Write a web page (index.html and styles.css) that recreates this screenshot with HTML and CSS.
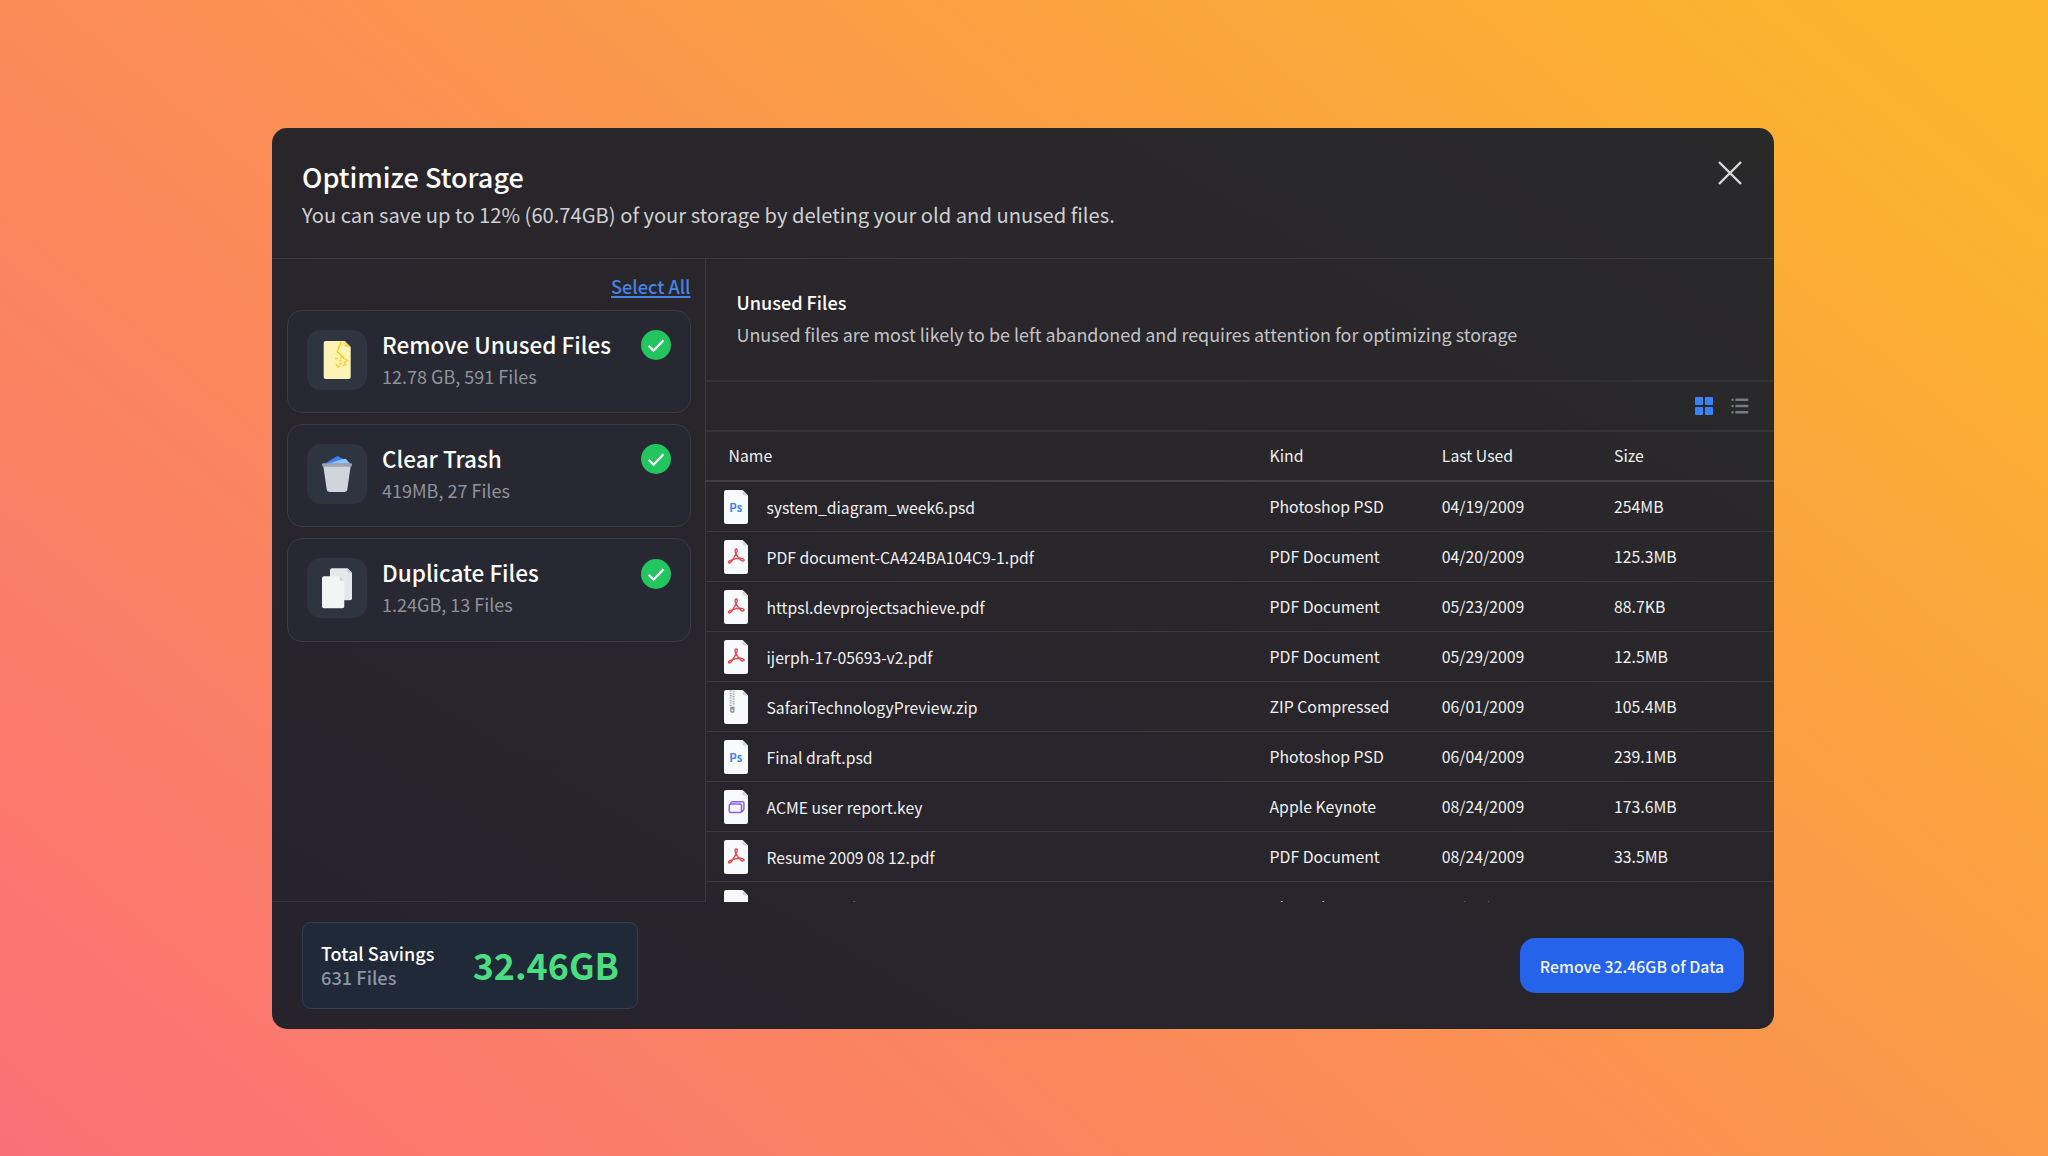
FILE: index.html
```html
<!DOCTYPE html>
<html lang="en">
<head>
<meta charset="utf-8">
<title>Optimize Storage</title>
<link rel="stylesheet" href="styles.css">
</head>
<body>
<svg class="sprites" width="0" height="0" aria-hidden="true">
  <symbol id="page" viewBox="0 0 24 34">
    <path d="M2.2 0H18.6L24 5.4V31.8a2.2 2.2 0 0 1-2.2 2.2H2.2A2.2 2.2 0 0 1 0 31.8V2.2A2.2 2.2 0 0 1 2.2 0Z" fill="#f9fafb"/>
    <path d="M18.6 0 24 5.4H20a1.4 1.4 0 0 1-1.4-1.4Z" fill="#d1d5db"/>
  </symbol>
  <symbol id="file-psd" viewBox="0 0 24 34">
    <use href="#page"/>
    <text x="5.3" y="21.7" class="ps-mark">Ps</text>
  </symbol>
  <symbol id="file-pdf" viewBox="0 0 24 34">
    <use href="#page"/>
    <path d="M12.200 9c-1.500 0-1.500 2.400-.1 5C13.300 16.200 15 18.400 17 20.200c1.500 1.500 3.600.5 2.900-.7C19 18 14 18 8.500 19.600 5.500 20.500 4 21.800 4.600 22.600c.8 1 2.600-.5 4-2.800C10.200 17.200 12 14.200 13 11.500c.5-1.500.1-2.500-.8-2.500Z" fill="none" stroke="#e5484d" stroke-width="1.400" stroke-linejoin="round"/>
  </symbol>
  <symbol id="file-zip" viewBox="0 0 24 34">
    <use href="#page"/>
    <path d="M6.600 .3v16M9.600 1.300v15" stroke="#9ca3af" stroke-width="1.900" stroke-dasharray="1.300 1.100" fill="none"/>
    <path d="M6.100 16.800h4.400v4.400a1.600 1.600 0 0 1-1.600 1.600H7.700a1.600 1.600 0 0 1-1.600-1.600Z" fill="#8b92a0"/>
    <path d="M7.500 19.500h1.700v1.700H7.500Z" fill="#f9fafb"/>
  </symbol>
  <symbol id="file-key" viewBox="0 0 24 34">
    <use href="#page"/>
    <g fill="none" stroke="#8b5cf6" stroke-width="1.500" stroke-linejoin="round">
      <rect x="5.300" y="14" width="12.200" height="8.400" rx="1.500"/>
      <path d="M6.200 14 7.300 12.400a1.200 1.200 0 0 1 1-.6H18.600a1.300 1.300 0 0 1 1.300 1.300V18.700a2 2 0 0 1-.6 1.400L17.700 21.600"/>
    </g>
  </symbol>
  <symbol id="check" viewBox="0 0 30 30">
    <circle cx="15" cy="15" r="15" fill="#22c55e"/>
    <path d="M7.600 15.800 12.500 20.700 22.400 10.400" fill="none" stroke="#fff" stroke-width="2.300"/>
  </symbol>
</svg>

<main class="modal">
  <header class="modal-head">
    <div>
      <h1 class="title">Optimize Storage</h1>
      <p class="subtitle">You can save up to 12% (60.74GB) of your storage by deleting your old and unused files.</p>
    </div>
    <svg class="close" viewBox="0 0 24 24"><path d="M1 1 23 23M23 1 1 23" fill="none" stroke="#d9d9da" stroke-width="2.400"/></svg>
  </header>

  <div class="modal-body">
    <aside class="side">
      <a class="select-all">Select All</a>
      <div class="card">
        <svg class="tile" viewBox="0 0 60 60">
          <path d="M18.700 11H37.700L43.700 17V47a2 2 0 0 1-2 2H18.700a2 2 0 0 1-2-2V13a2 2 0 0 1 2-2Z" fill="#fef3b4"/>
          <path d="M37.700 11 43.700 17H39a1.300 1.300 0 0 1-1.300-1.300Z" fill="#fcd34d"/>
          <path d="M34.200 11.500 30.300 21.500 37.300 28.500" fill="none" stroke="#facc15" stroke-width="1.500"/>
          <path d="M37.300 28.500 40.500 30.500 37.500 32.500 38.500 34.500 35.500 36M33.500 26.500 34.500 28.500M28 28.500H31M32.500 30 34.500 31.500M29 34 31 37 33 35.500M32 33.500 35 34" fill="none" stroke="#fbd34b" stroke-width="1.700"/>
        </svg>
        <div class="card-text"><h2 class="card-title">Remove Unused Files</h2><p class="card-sub">12.78 GB, 591 Files</p></div>
        <svg class="check"><use href="#check"/></svg>
      </div>
      <div class="card">
        <svg class="tile" viewBox="0 0 60 60">
          <path d="M17.500 19.800 30.500 12 37 15.500V20Z" fill="#3b82f6"/>
          <path d="M21 20 34 15.500 38.500 14.800 43.500 19.800Z" fill="#93c5fd"/>
          <path d="M16.300 22H43.700L40.300 45.600a2.800 2.800 0 0 1-2.800 2.400H22.500a2.800 2.800 0 0 1-2.800-2.400Z" fill="#d1d5db"/>
          <path d="M16 19.300H44a1 1 0 0 1 1 1L44.400 22.700H15.600L15 20.300a1 1 0 0 1 1-1Z" fill="#9ca3af"/>
        </svg>
        <div class="card-text"><h2 class="card-title">Clear Trash</h2><p class="card-sub">419MB, 27 Files</p></div>
        <svg class="check"><use href="#check"/></svg>
      </div>
      <div class="card">
        <svg class="tile" viewBox="0 0 60 60">
          <path d="M25 10.300H40.500L45 14.800V40.300a2 2 0 0 1-2 2H25a2 2 0 0 1-2-2V12.300a2 2 0 0 1 2-2Z" fill="#e5e7eb"/>
          <path d="M40.500 10.300 45 14.800H41.500a1 1 0 0 1-1-1Z" fill="#c9cdd4"/>
          <path d="M17 18.200H32.700L37.300 22.800V48.200a2 2 0 0 1-2 2H17a2 2 0 0 1-2-2V20.200a2 2 0 0 1 2-2Z" fill="#f3f4f6"/>
          <path d="M32.700 18.200 37.300 22.800H33.700a1 1 0 0 1-1-1Z" fill="#d1d5db"/>
        </svg>
        <div class="card-text"><h2 class="card-title">Duplicate Files</h2><p class="card-sub">1.24GB, 13 Files</p></div>
        <svg class="check"><use href="#check"/></svg>
      </div>
    </aside>

    <section class="detail">
      <div class="intro">
        <h3 class="intro-title">Unused Files</h3>
        <p class="intro-text">Unused files are most likely to be left abandoned and requires attention for optimizing storage</p>
      </div>
      <div class="toolbar">
        <svg class="tool" viewBox="0 0 18 18" fill="#3b82f6"><rect width="8.100" height="8.100" rx="1"/><rect x="9.900" width="8.100" height="8.100" rx="1"/><rect y="9.900" width="8.100" height="8.100" rx="1"/><rect x="9.900" y="9.900" width="8.100" height="8.100" rx="1"/></svg>
        <svg class="tool" viewBox="0 0 18 18" fill="#757a86"><circle cx="1.600" cy="2.700" r="1.200"/><circle cx="1.600" cy="9" r="1.200"/><circle cx="1.600" cy="15.300" r="1.200"/><rect x="4.300" y="1.500" width="13" height="2.400" rx=".5"/><rect x="4.300" y="7.800" width="13" height="2.400" rx=".5"/><rect x="4.300" y="14.100" width="13" height="2.400" rx=".5"/></svg>
      </div>
      <div class="row row-head"><span class="head-name">Name</span><span>Kind</span><span>Last Used</span><span>Size</span></div>
      <div class="rows">
        <div class="row"><div class="name"><svg class="file"><use href="#file-psd"/></svg>system_diagram_week6.psd</div><span>Photoshop PSD</span><span>04/19/2009</span><span>254MB</span></div>
        <div class="row"><div class="name"><svg class="file"><use href="#file-pdf"/></svg>PDF document-CA424BA104C9-1.pdf</div><span>PDF Document</span><span>04/20/2009</span><span>125.3MB</span></div>
        <div class="row"><div class="name"><svg class="file"><use href="#file-pdf"/></svg>httpsl.devprojectsachieve.pdf</div><span>PDF Document</span><span>05/23/2009</span><span>88.7KB</span></div>
        <div class="row"><div class="name"><svg class="file"><use href="#file-pdf"/></svg>ijerph-17-05693-v2.pdf</div><span>PDF Document</span><span>05/29/2009</span><span>12.5MB</span></div>
        <div class="row"><div class="name"><svg class="file"><use href="#file-zip"/></svg>SafariTechnologyPreview.zip</div><span>ZIP Compressed</span><span>06/01/2009</span><span>105.4MB</span></div>
        <div class="row"><div class="name"><svg class="file"><use href="#file-psd"/></svg>Final draft.psd</div><span>Photoshop PSD</span><span>06/04/2009</span><span>239.1MB</span></div>
        <div class="row"><div class="name"><svg class="file"><use href="#file-key"/></svg>ACME user report.key</div><span>Apple Keynote</span><span>08/24/2009</span><span>173.6MB</span></div>
        <div class="row"><div class="name"><svg class="file"><use href="#file-pdf"/></svg>Resume 2009 08 12.pdf</div><span>PDF Document</span><span>08/24/2009</span><span>33.5MB</span></div>
        <div class="row row-last"><div class="name"><svg class="file"><use href="#page"/></svg>Homepage final.psd</div><span>Photoshop PSD</span><span>09/12/2009</span><span>289.1MB</span></div>
      </div>
    </section>
  </div>

  <footer class="modal-foot">
    <div class="savings">
      <div><p class="savings-title">Total Savings</p><p class="savings-sub">631 Files</p></div>
      <strong class="savings-total">32.46GB</strong>
    </div>
    <button class="remove">Remove 32.46GB of Data</button>
  </footer>
</main>
</body>
</html>
```
FILE: styles.css
```css
* { box-sizing: border-box; margin: 0; padding: 0; }

body {
  width: 2048px;
  height: 1156px;
  padding: 128px 0 0 272px;
  overflow: hidden;
  font-family: "Noto Sans CJK SC", "Noto Sans", sans-serif;
  color: #fff;
  background: linear-gradient(40deg, #fb7078 0%, #fb9053 47%, #fbb230 90%, #fcb52d 100%);
}

.sprites { position: absolute; }

.modal {
  display: flex;
  flex-direction: column;
  width: 1502px;
  height: 901px;
  border-radius: 15px;
  overflow: hidden;
  background: linear-gradient(to top right, #27232d 0%, #28262b 50%, #2a292a 100%);
}

.modal-head {
  display: flex;
  flex: none;
  justify-content: space-between;
  height: 131px;
  padding: 32px 32px 0 30px;
  border-bottom: 1px solid #3b3a40;
}
.title { font-size: 27.05px; font-weight: 500; line-height: 34px; }
.subtitle { margin-top: 6px; font-size: 20.17px; line-height: 30px; color: #cfcfd2; }
.close { width: 24px; height: 24px; margin-top: 1px; }

.modal-body { display: flex; flex: none; height: 643px; }

.side {
  display: flex;
  flex: none;
  flex-direction: column;
  gap: 10.700px;
  width: 434px;
  padding: 15px 14px 0 15px;
  border-right: 1px solid #3b3a40;
  border-bottom: 1px solid #333642;
}
.select-all {
  align-self: flex-end;
  margin: 0 .5px 1px 0;
  font-size: 18.150px;
  font-weight: 500;
  line-height: 24px;
  color: #4583e6;
  text-decoration: underline;
  text-decoration-thickness: 1.500px;
  text-underline-offset: 2px;
}
.card {
  display: flex;
  height: 103.500px;
  padding: 18px 19px 0 19px;
  border: 1px solid #3a3b42;
  border-radius: 15px;
  background: #272831;
}
.tile { flex: none; width: 60px; height: 60px; margin-top: 1px; border-radius: 14px; background: #2e3540; }
.card-text { flex: 1; padding: .3px 0 0 15px; }
.card-title { font-size: 22.520px; font-weight: 500; line-height: 30px; white-space: nowrap; }
.card-sub { margin-top: 3.700px; font-size: 18px; line-height: 26px; color: #8f929d; }
.check { flex: none; width: 30px; height: 30px; margin-top: 1.500px; }

.detail { flex: 1; display: flex; flex-direction: column; overflow: hidden; }
.intro { flex: none; height: 123px; padding: 31px 0 0 30.500px; border-bottom: 2px solid #343338; }
.intro-title { font-size: 18.080px; font-weight: 500; line-height: 24px; }
.intro-text { margin-top: 6.500px; font-size: 17.920px; line-height: 26px; color: #c3c3c7; }
.toolbar {
  display: flex;
  flex: none;
  justify-content: flex-end;
  align-items: center;
  gap: 18px;
  height: 50px;
  padding: 0 25.500px 0 0;
  border-bottom: 2px solid #343338;
}
.tool { width: 18px; height: 18px; }

.rows { flex: 1; min-height: 0; overflow: hidden; }
.row {
  display: grid;
  grid-template-columns: 563.500px 172.300px 172.200px 1fr;
  align-items: center;
  height: 50px;
  border-bottom: 1px solid #3b3a3f;
  font-size: 15.820px;
  line-height: 24px;
  color: #f0f0f1;
}
.row-last { padding-top: 2px; }
.row-last .file { margin-top: -2px; }
.row-head { flex: none; border-bottom: 2px solid #403f44; }
.row-head .head-name { padding-left: 22.500px; }
.name { display: flex; align-items: center; gap: 18.500px; padding: 2px 0 0 18px; font-size: 15.720px; }
.file { width: 24px; height: 34px; margin-bottom: 1px; }
.ps-mark { font: 700 11.300px "Noto Sans CJK SC", sans-serif; fill: #3b82f6; }

.modal-foot {
  display: flex;
  flex: 1;
  justify-content: space-between;
  align-items: flex-start;
  padding: 20px 30px 0 30px;
}
.savings {
  display: flex;
  justify-content: space-between;
  width: 335.500px;
  height: 87px;
  padding: 18px 17.500px 0 18px;
  border: 1px solid #344052;
  border-radius: 9px;
  background: #1f2937;
}
.savings-title { font-size: 18px; font-weight: 500; line-height: 24px; }
.savings-sub { font-size: 18.260px; font-weight: 500; line-height: 24px; color: #8b95a3; }
.savings-total { font-size: 35.840px; font-weight: 700; line-height: 47px; color: #4ade80; }
.remove {
  width: 224px;
  height: 55px;
  margin-top: 16px;
  padding-top: 2px;
  border: 0;
  border-radius: 15px;
  font: 500 15.830px/24px "Noto Sans CJK SC", sans-serif;
  color: #f3f6ff;
  background: #2563eb;
}
```
